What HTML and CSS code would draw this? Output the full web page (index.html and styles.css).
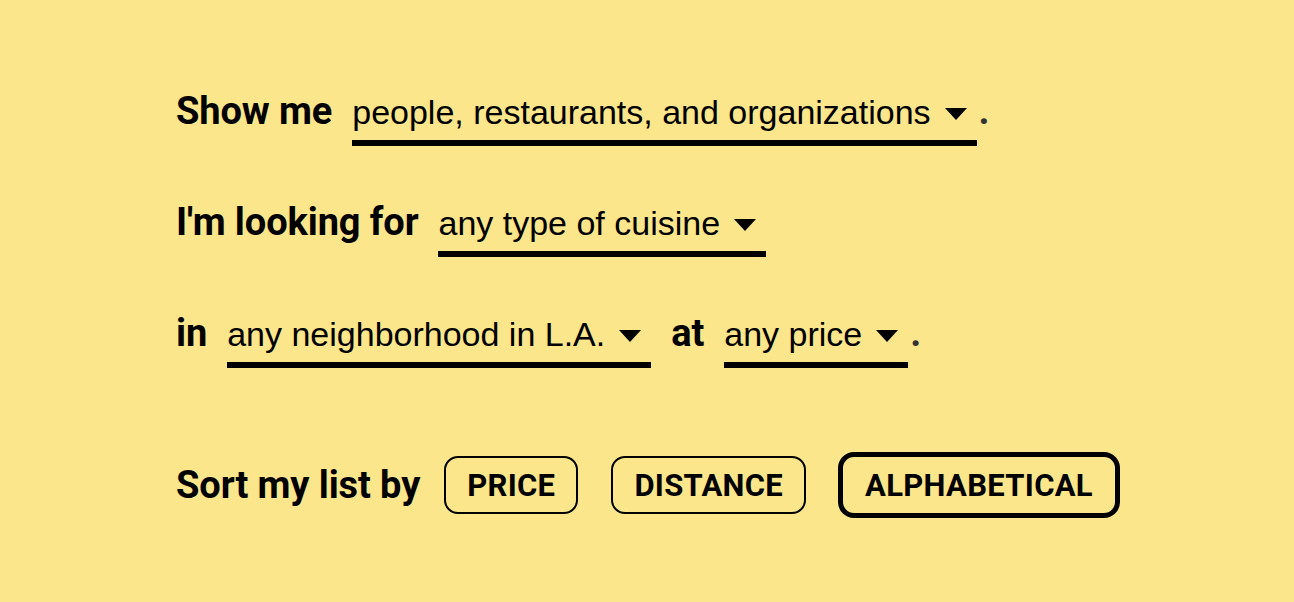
FILE: index.html
```html
<!DOCTYPE html>
<html lang="en">
<head>
<meta charset="utf-8">
<title>Filter</title>
<link rel="stylesheet" href="styles.css">
</head>
<body>
<main class="filters">
  <div class="line">
    <span class="label">Show me</span><span class="select">people, restaurants, and organizations<svg class="caret" width="22" height="12" viewBox="0 0 22 12"><polygon points="0,0 22,0 11,12"/></svg></span><span class="dot">.</span>
  </div>
  <div class="line">
    <span class="label">I'm looking for</span><span class="select">any type of cuisine<svg class="caret" width="22" height="12" viewBox="0 0 22 12"><polygon points="0,0 22,0 11,12"/></svg></span>
  </div>
  <div class="line">
    <span class="label">in</span><span class="select">any neighborhood in L.A.<svg class="caret" width="22" height="12" viewBox="0 0 22 12"><polygon points="0,0 22,0 11,12"/></svg></span><span class="label label-mid">at</span><span class="select">any price<svg class="caret" width="22" height="12" viewBox="0 0 22 12"><polygon points="0,0 22,0 11,12"/></svg></span><span class="dot">.</span>
  </div>
  <div class="sort">
    <span class="label">Sort my list by</span>
    <button class="btn">PRICE</button>
    <button class="btn">DISTANCE</button>
    <button class="btn btn-active">ALPHABETICAL</button>
  </div>
</main>
</body>
</html>
```

FILE: styles.css
```css
html, body {
  margin: 0;
  padding: 0;
}
body {
  background: #fbe68b;
  color: #000;
  width: 1294px;
  height: 602px;
  overflow: hidden;
}
.filters {
  display: flex;
  flex-direction: column;
  padding: 91px 0 0 176px;
}
.line {
  font-family: "Liberation Sans", Arial, sans-serif;
  font-size: 34px;
  line-height: 40px;
  height: 58px;
  margin-bottom: 53px;
  white-space: nowrap;
}
.label {
  font-family: Roboto, "Liberation Sans", sans-serif;
  font-weight: 700;
  font-size: 38px;
  letter-spacing: -0.1px;
}
.label-mid {
  margin-left: 20px;
}
.select {
  display: inline-block;
  margin-left: 20px;
  padding: 0 10px 8px 0;
  border-bottom: 6px solid #000;
  line-height: 40px;
}
.caret {
  margin-left: 14px;
  vertical-align: 4px;
  fill: #000;
}
.dot {
  font-family: Roboto, "Liberation Sans", sans-serif;
  font-weight: 700;
  font-size: 38px;
  color: #333;
  margin-left: 2px;
}
.sort {
  display: flex;
  align-items: center;
  margin-top: 28px;
}
.sort .label {
  margin-right: 24px;
}
.btn {
  box-sizing: border-box;
  height: 58px;
  display: flex;
  align-items: center;
  padding: 0 21px;
  margin-right: 33px;
  background: transparent;
  border: 2px solid #000;
  border-radius: 14px;
  font-family: Roboto, "Liberation Sans", sans-serif;
  font-weight: 700;
  font-size: 31px;
  letter-spacing: 0.3px;
  color: #000;
}
.btn-active {
  height: 66px;
  border-width: 5px;
  border-radius: 16px;
  margin-left: -1px;
  padding: 0 22px;
}
```
